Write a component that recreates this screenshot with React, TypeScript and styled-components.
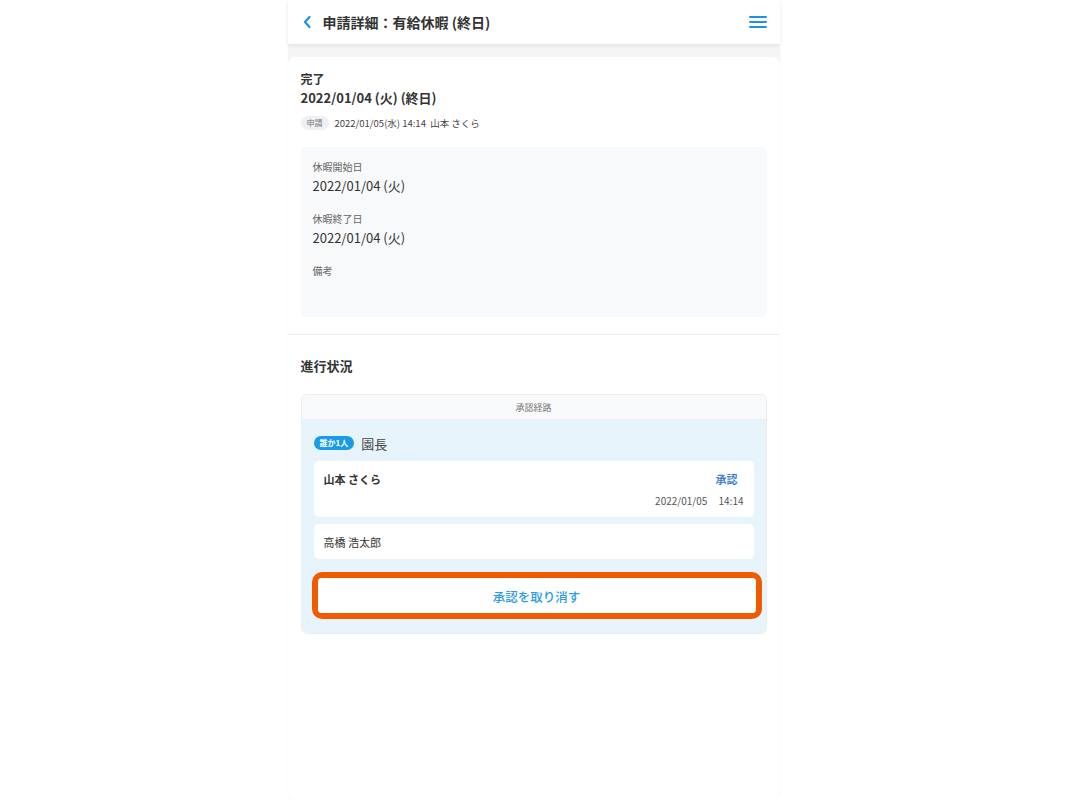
import styled, { createGlobalStyle } from "styled-components";

const GlobalStyle = createGlobalStyle`
    html, body {
        margin: 0;
        padding: 0;
        background: #ffffff;
        font-family: "Noto Sans CJK JP", "Noto Sans", sans-serif;
        color: #333;
    }
`;

const Frame = styled.div`
    width: 492px;
    min-height: 800px;
    margin: 0 auto;
    background-color: #f4f5f7;
    border-radius: 0 0 8px 8px;
    box-shadow: 0 0 2px rgba(0, 0, 0, 0.06);
    display: flex;
    flex-direction: column;
`;

const Header = styled.header`
    height: 44px;
    background-color: white;
    display: flex;
    align-items: center;
    padding: 0 13px 0 14px;
    box-shadow: 0 2px 4px rgba(0, 0, 0, 0.07);
    position: relative;
    z-index: 1;
`;

const BackButton = styled.button`
    border: 0;
    background: none;
    padding: 0;
    width: 12px;
    height: 20px;
    display: flex;
    align-items: center;
    cursor: pointer;
`;

const Title = styled.h1`
    margin: 0 0 0 9px;
    font-size: 14px;
    font-weight: 700;
    color: #333;
    flex: 1;
`;

const MenuButton = styled.button`
    border: 0;
    background: none;
    padding: 0;
    width: 18px;
    height: 20px;
    display: flex;
    align-items: center;
    justify-content: center;
    cursor: pointer;
`;

const Main = styled.main`
    margin-top: 13px;
    flex: 1;
    background-color: white;
    border-radius: 8px;
`;

const Section = styled.section<{ $divider?: boolean }>`
    padding: ${(p) => (p.$divider ? "13px 13px 17px" : "21px 13px 20px")};
    border-bottom: ${(p) => (p.$divider ? "1px solid #eceef0" : "0")};
`;

const Status = styled.div`
    font-size: 12px;
    line-height: 18px;
    font-weight: 700;
`;

const DateTitle = styled.div`
    font-size: 13px;
    line-height: 20px;
    font-weight: 700;
`;

const MetaRow = styled.div`
    margin-top: 8px;
    display: flex;
    align-items: center;
    gap: 6px;
    font-size: 9.5px;
    line-height: 14px;
    color: #444;
`;

const Tag = styled.span`
    background-color: #eef0f4;
    color: #777;
    font-size: 8px;
    border-radius: 7px;
    padding: 0 6px;
    line-height: 14px;
`;

const DetailBox = styled.div`
    margin-top: 17px;
    background-color: #f8f9fb;
    border-radius: 6px;
    padding: 13px 12px 13px;
`;

const FieldLabel = styled.div<{ $first?: boolean }>`
    font-size: 10px;
    line-height: 14px;
    color: #666;
    margin-top: ${(p) => (p.$first ? "0" : "16px")};
`;

const FieldValue = styled.div`
    margin-top: 2px;
    font-size: 13px;
    line-height: 20px;
    color: #333;
    min-height: 20px;
`;

const EmptyValue = styled.div`
    margin-top: 2px;
    min-height: 24px;
`;

const SectionTitle = styled.h2`
    margin: 0;
    font-size: 13px;
    line-height: 20px;
    font-weight: 700;
`;

const RouteCard = styled.div`
    margin-top: 18px;
    border: 1px solid #ebedf0;
    border-radius: 6px;
    overflow: hidden;
`;

const RouteHeader = styled.div`
    height: 24px;
    background-color: #f8f9fb;
    font-size: 9px;
    color: #777;
    display: flex;
    align-items: center;
    justify-content: center;
    border-bottom: 1px solid #eef0f3;
`;

const RouteBody = styled.div`
    background-color: #e8f4fc;
    padding: 13px 12px 14px;
    display: flex;
    flex-direction: column;
    gap: 7px;
`;

const StepRow = styled.div`
    display: flex;
    align-items: center;
    gap: 7px;
    height: 20px;
    margin-bottom: 1px;
`;

const Badge = styled.span`
    background-color: #1a9be8;
    color: white;
    font-size: 8px;
    font-weight: 700;
    border-radius: 7px;
    padding: 0 6px;
    line-height: 14px;
`;

const StepName = styled.span`
    font-size: 13px;
    color: #444;
`;

const ApproverCard = styled.div<{ $tall?: boolean }>`
    background-color: white;
    border-radius: 5px;
    padding: ${(p) => (p.$tall ? "9px 10px 9px" : "9px 10px 8px")};
`;

const ApproverTop = styled.div`
    display: flex;
    justify-content: space-between;
    align-items: center;
    line-height: 18px;
`;

const ApproverName = styled.span<{ $bold?: boolean }>`
    font-size: 11px;
    font-weight: ${(p) => (p.$bold ? 700 : 400)};
    color: #333;
`;

const Result = styled.span`
    font-size: 11px;
    font-weight: 700;
    color: #3f7fd0;
    margin-right: 6px;
`;

const ApprovedAt = styled.div`
    margin-top: 6px;
    text-align: right;
    font-size: 10px;
    line-height: 14px;
    color: #555;
    white-space: pre;
`;

const Highlight = styled.div`
    margin: 6px -8px 0 -2px;
    border: 6px solid #f05a00;
    border-radius: 10px;
`;

const CancelButton = styled.button`
    width: 100%;
    height: 35px;
    padding-top: 3px;
    border: 0;
    border-radius: 4px;
    background-color: white;
    color: #2a9be6;
    font-family: inherit;
    font-size: 12.5px;
    font-weight: 500;
    cursor: pointer;
`;

export default function App() {
    return (
        <>
            <GlobalStyle />
            <Frame>
                <Header>
                    <BackButton>
                        <svg width="10" height="14" viewBox="0 0 10 14">
                            <path d="M7.5 2 L3 7 L7.5 12" fill="none" stroke="#1e90e8" strokeWidth="2.2" strokeLinecap="round" strokeLinejoin="round" />
                        </svg>
                    </BackButton>
                    <Title>申請詳細：有給休暇 (終日)</Title>
                    <MenuButton>
                        <svg width="18" height="14" viewBox="0 0 18 14">
                            <path d="M1 2 H17 M1 7 H17 M1 12 H17" stroke="#1e90e8" strokeWidth="2" strokeLinecap="round" />
                        </svg>
                    </MenuButton>
                </Header>
                <Main>
                    <Section $divider>
                        <Status>完了</Status>
                        <DateTitle>2022/01/04 (火) (終日)</DateTitle>
                        <MetaRow>
                            <Tag>申請</Tag>
                            <span>2022/01/05(水) 14:14&nbsp;&nbsp;山本 さくら</span>
                        </MetaRow>
                        <DetailBox>
                            <FieldLabel $first>休暇開始日</FieldLabel>
                            <FieldValue>2022/01/04 (火)</FieldValue>
                            <FieldLabel>休暇終了日</FieldLabel>
                            <FieldValue>2022/01/04 (火)</FieldValue>
                            <FieldLabel>備考</FieldLabel>
                            <EmptyValue />
                        </DetailBox>
                    </Section>
                    <Section>
                        <SectionTitle>進行状況</SectionTitle>
                        <RouteCard>
                            <RouteHeader>承認経路</RouteHeader>
                            <RouteBody>
                                <StepRow>
                                    <Badge>誰か1人</Badge>
                                    <StepName>園長</StepName>
                                </StepRow>
                                <ApproverCard $tall>
                                    <ApproverTop>
                                        <ApproverName $bold>山本 さくら</ApproverName>
                                        <Result>承認</Result>
                                    </ApproverTop>
                                    <ApprovedAt>{"2022/01/05     14:14"}</ApprovedAt>
                                </ApproverCard>
                                <ApproverCard>
                                    <ApproverTop>
                                        <ApproverName>高橋 浩太郎</ApproverName>
                                    </ApproverTop>
                                </ApproverCard>
                                <Highlight>
                                    <CancelButton>承認を取り消す</CancelButton>
                                </Highlight>
                            </RouteBody>
                        </RouteCard>
                    </Section>
                </Main>
            </Frame>
        </>
    );
}
